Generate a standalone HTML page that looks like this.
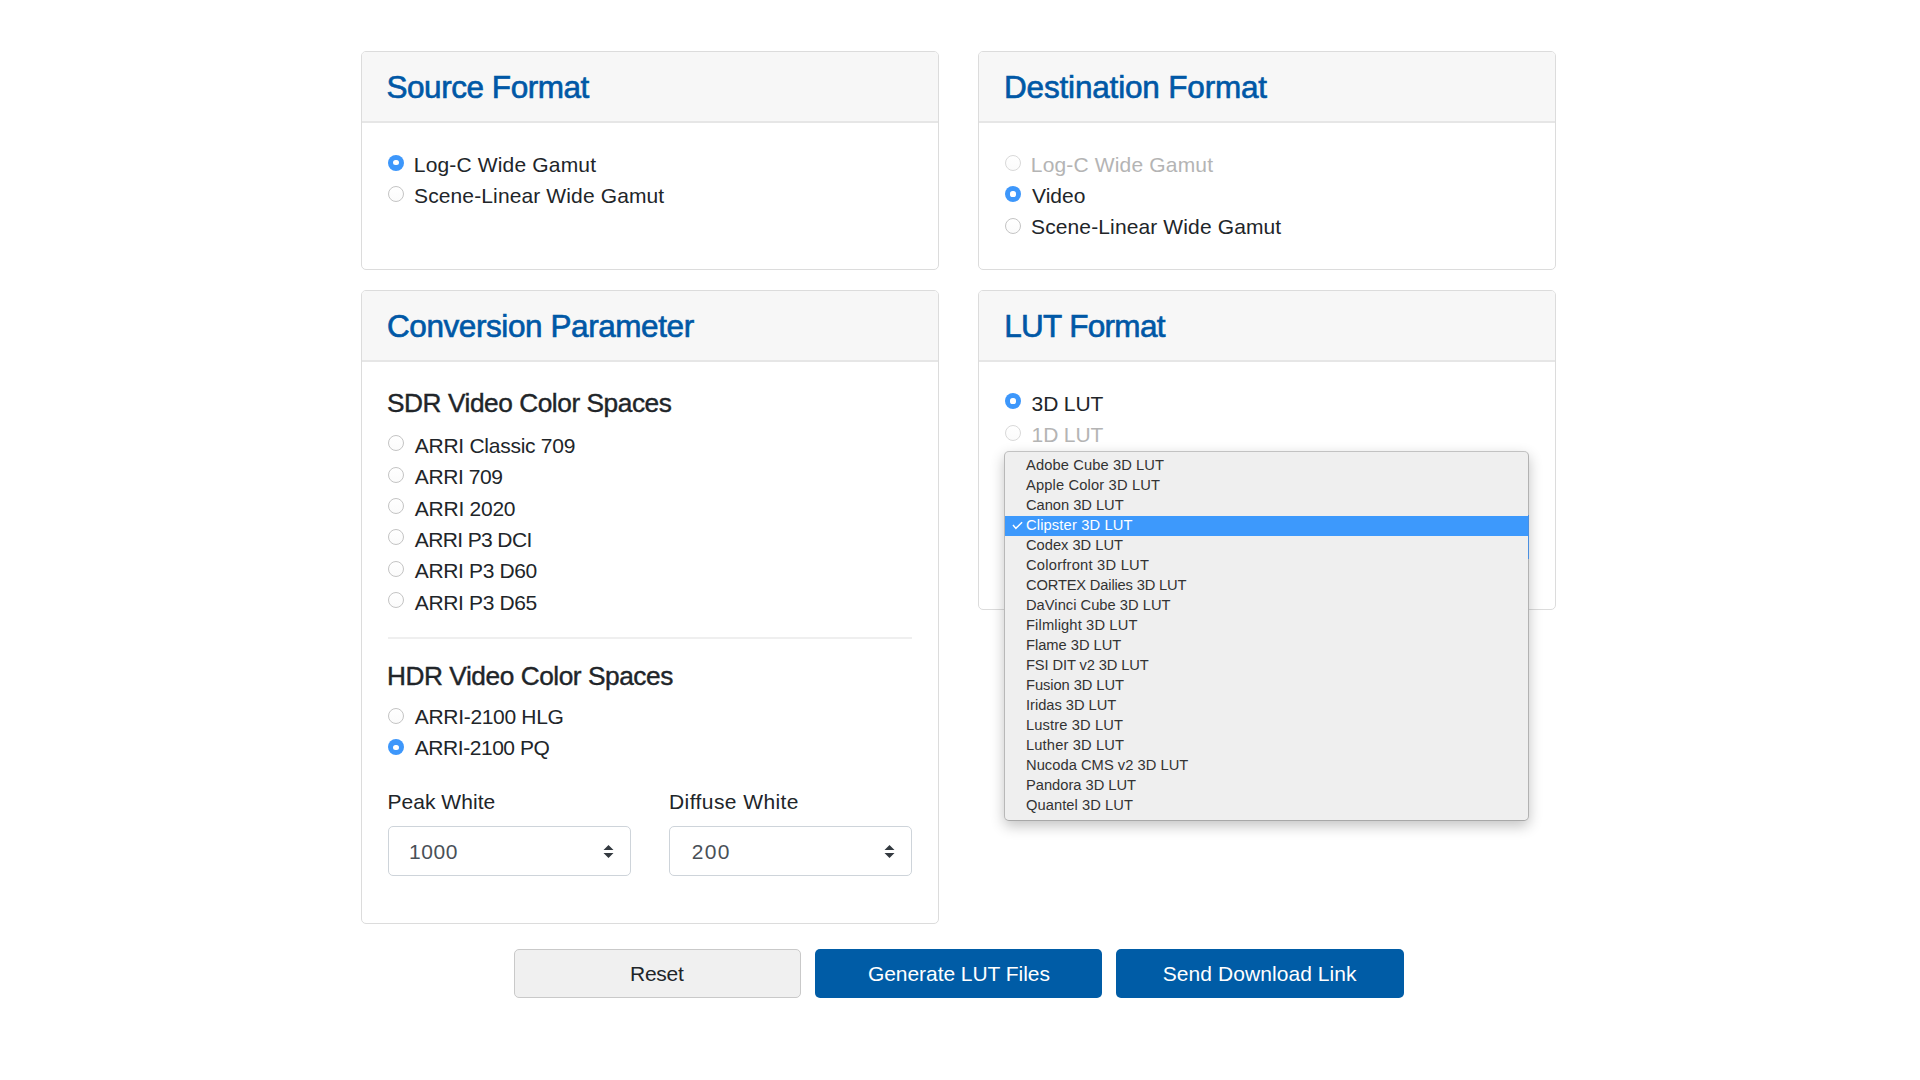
<!DOCTYPE html>
<html>
<head>
<meta charset="utf-8">
<style>
html,body{margin:0;padding:0;background:#fff;width:1920px;height:1080px;overflow:hidden;position:relative;}
body{font-family:"Liberation Sans",sans-serif;color:#212529;}
.card{position:absolute;box-sizing:border-box;border:1px solid #dcdcdc;border-radius:5px;background:#fff;}
.hdr{position:absolute;left:0;right:0;top:0;background:#f7f7f7;border-bottom:2px solid #e6e6e6;border-radius:4px 4px 0 0;}
.t{position:absolute;white-space:nowrap;line-height:1;}
.h4{font-size:31.5px;color:#0058a6;letter-spacing:-0.4px;-webkit-text-stroke:0.65px #0058a6;}
.h5{font-size:26.25px;color:#212529;letter-spacing:-0.45px;-webkit-text-stroke:0.4px #212529;}
.lb{font-size:21px;color:#212529;letter-spacing:0.15px;}
.dis{color:#b4b4b4;}
.r{position:absolute;width:16px;height:16px;box-sizing:border-box;border-radius:50%;border:1px solid #c4c4c4;background:linear-gradient(#fff,#fbfbfb);}
.r.on{border:none;background:#3d97fb;}
.r.on::after{content:"";position:absolute;left:5.4px;top:5.4px;width:5.2px;height:5.2px;border-radius:50%;background:#fff;}
.r.off{border-color:#d9d9d9;}
.sel{position:absolute;box-sizing:border-box;border:1px solid #ced4da;border-radius:5px;background:#fff;}
.btn{position:absolute;box-sizing:border-box;border-radius:5px;}
.dd{position:absolute;box-sizing:border-box;background:#efefef;border:1px solid #bababa;border-color:#c2c2c2 #b2b2b2 #a8a8a8 #b8b8b8;border-radius:5px;box-shadow:0 5px 14px rgba(0,0,0,0.24);}
.it{position:absolute;left:21px;font-size:14.7px;letter-spacing:0.08px;line-height:1;white-space:nowrap;color:#333;}
</style>
</head>
<body>

<!-- Card 1 Source Format -->
<div class="card" style="left:361px;top:51px;width:578px;height:219px;">
  <div class="hdr" style="height:69px;"></div>
</div>
<div class="t h4" style="left:386.5px;top:72px;letter-spacing:-0.458px;">Source Format</div>
<div class="r on" style="left:388px;top:154.5px;"></div>
<div class="t lb" style="left:413.8px;top:154px;letter-spacing:0.163px;">Log-C Wide Gamut</div>
<div class="r" style="left:388px;top:186px;"></div>
<div class="t lb" style="left:414.0px;top:185.3px;letter-spacing:0.125px;">Scene-Linear Wide Gamut</div>

<!-- Card 2 Destination Format -->
<div class="card" style="left:978px;top:51px;width:578px;height:219px;">
  <div class="hdr" style="height:69px;"></div>
</div>
<div class="t h4" style="left:1004.0px;top:72px;letter-spacing:-0.176px;">Destination Format</div>
<div class="r off" style="left:1005px;top:155px;"></div>
<div class="t lb dis" style="left:1030.8px;top:154px;letter-spacing:0.163px;">Log-C Wide Gamut</div>
<div class="r on" style="left:1005px;top:186px;"></div>
<div class="t lb" style="left:1032.0px;top:185.3px;letter-spacing:0px;">Video</div>
<div class="r" style="left:1005px;top:217.5px;"></div>
<div class="t lb" style="left:1031.0px;top:216px;letter-spacing:0.125px;">Scene-Linear Wide Gamut</div>

<!-- Card 3 Conversion Parameter -->
<div class="card" style="left:361px;top:290px;width:578px;height:634px;">
  <div class="hdr" style="height:69px;"></div>
</div>
<div class="t h4" style="left:387.0px;top:311px;letter-spacing:-0.421px;">Conversion Parameter</div>
<div class="t h5" style="left:387.0px;top:390px;letter-spacing:-0.448px;">SDR Video Color Spaces</div>

<div class="r" style="left:388px;top:435.2px;"></div>
<div class="t lb" style="left:414.8px;top:435px;letter-spacing:-0.267px;">ARRI Classic 709</div>
<div class="r" style="left:388px;top:466.5px;"></div>
<div class="t lb" style="left:414.8px;top:466.3px;letter-spacing:-0.4px;">ARRI 709</div>
<div class="r" style="left:388px;top:497.9px;"></div>
<div class="t lb" style="left:414.8px;top:497.7px;letter-spacing:-0.25px;">ARRI 2020</div>
<div class="r" style="left:388px;top:529.2px;"></div>
<div class="t lb" style="left:414.8px;top:529px;letter-spacing:-0.62px;">ARRI P3 DCI</div>
<div class="r" style="left:388px;top:560.6px;"></div>
<div class="t lb" style="left:414.8px;top:560.4px;letter-spacing:-0.36px;">ARRI P3 D60</div>
<div class="r" style="left:388px;top:592px;"></div>
<div class="t lb" style="left:414.8px;top:591.8px;letter-spacing:-0.36px;">ARRI P3 D65</div>

<div style="position:absolute;left:388px;top:637px;width:524px;height:2px;background:#efefef;"></div>

<div class="t h5" style="left:387.0px;top:663px;letter-spacing:-0.448px;">HDR Video Color Spaces</div>
<div class="r" style="left:388px;top:707.8px;"></div>
<div class="t lb" style="left:414.8px;top:705.5px;letter-spacing:-0.317px;">ARRI-2100 HLG</div>
<div class="r on" style="left:388px;top:739.3px;"></div>
<div class="t lb" style="left:414.8px;top:737px;letter-spacing:-0.455px;">ARRI-2100 PQ</div>

<div class="t lb" style="left:387.4px;top:791px;letter-spacing:0.056px;">Peak White</div>
<div class="t lb" style="left:669.0px;top:791px;letter-spacing:0.417px;">Diffuse White</div>

<div class="sel" style="left:388px;top:826px;width:243px;height:50px;"></div>
<div class="t lb" style="left:409.0px;top:841px;color:#495057;letter-spacing:0.567px;">1000</div>
<svg style="position:absolute;left:603px;top:844px;" width="11" height="15" viewBox="0 0 11 15"><path d="M5.5 1 L10.5 6 L0.5 6 Z M0.5 9 L10.5 9 L5.5 14 Z" fill="#343a40"/></svg>
<div class="sel" style="left:669px;top:826px;width:243px;height:50px;"></div>
<div class="t lb" style="left:691.7px;top:841px;color:#495057;letter-spacing:1.35px;">200</div>
<svg style="position:absolute;left:884px;top:844px;" width="11" height="15" viewBox="0 0 11 15"><path d="M5.5 1 L10.5 6 L0.5 6 Z M0.5 9 L10.5 9 L5.5 14 Z" fill="#343a40"/></svg>

<!-- Card 4 LUT Format -->
<div class="card" style="left:978px;top:290px;width:578px;height:320px;">
  <div class="hdr" style="height:69px;"></div>
</div>
<div class="t h4" style="left:1004.2px;top:311px;letter-spacing:-0.68px;">LUT Format</div>
<div class="r on" style="left:1005px;top:393px;"></div>
<div class="t lb" style="left:1031.6px;top:393px;letter-spacing:-0.14px;">3D LUT</div>
<div class="r off" style="left:1005px;top:424.7px;"></div>
<div class="t lb dis" style="left:1031.6px;top:424.3px;letter-spacing:-0.14px;">1D LUT</div>

<!-- Buttons -->
<div class="btn" style="left:514px;top:949px;width:287px;height:49px;background:#f0f0f0;border:1px solid #c9c9c9;"></div>
<div class="t lb" style="left:630.0px;top:963px;letter-spacing:-0.25px;">Reset</div>
<div class="btn" style="left:815px;top:949px;width:287px;height:49px;background:#005ca6;"></div>
<div class="t lb" style="left:867.9px;top:963px;color:#fff;letter-spacing:-0.05px;">Generate LUT Files</div>
<div class="btn" style="left:1116px;top:949px;width:287.5px;height:49px;background:#005ca6;"></div>
<div class="t lb" style="left:1162.8px;top:963px;color:#fff;letter-spacing:0.068px;">Send Download Link</div>

<!-- Dropdown -->
<div class="dd" style="left:1004px;top:451px;width:525px;height:370px;">
  <div style="position:absolute;left:0;right:0;top:64px;height:20px;background:#3d99fc;"></div>
  <div style="position:absolute;right:-1px;top:63px;width:1px;height:44px;background:#4a8fe0;"></div>
  <svg style="position:absolute;left:7px;top:69px;" width="12" height="9" viewBox="0 0 12 9"><path d="M1 4.1 L3.9 7.4 L10.1 1.2" fill="none" stroke="#fff" stroke-width="1.5"/></svg>
  <div class="it" style="top:6px;letter-spacing:0.106px;">Adobe Cube 3D LUT</div>
  <div class="it" style="top:26px;letter-spacing:0.147px;">Apple Color 3D LUT</div>
  <div class="it" style="top:46px;letter-spacing:-0.027px;">Canon 3D LUT</div>
  <div class="it" style="top:66px;color:#fff;letter-spacing:0.143px;">Clipster 3D LUT</div>
  <div class="it" style="top:86px;letter-spacing:-0.018px;">Codex 3D LUT</div>
  <div class="it" style="top:106px;letter-spacing:0.231px;">Colorfront 3D LUT</div>
  <div class="it" style="top:126px;letter-spacing:-0.165px;">CORTEX Dailies 3D LUT</div>
  <div class="it" style="top:146px;letter-spacing:0.017px;">DaVinci Cube 3D LUT</div>
  <div class="it" style="top:166px;letter-spacing:0.133px;">Filmlight 3D LUT</div>
  <div class="it" style="top:186px;letter-spacing:-0.018px;">Flame 3D LUT</div>
  <div class="it" style="top:206px;letter-spacing:-0.112px;">FSI DIT v2 3D LUT</div>
  <div class="it" style="top:226px;letter-spacing:-0.067px;">Fusion 3D LUT</div>
  <div class="it" style="top:246px;letter-spacing:-0.025px;">Iridas 3D LUT</div>
  <div class="it" style="top:266px;letter-spacing:0.125px;">Lustre 3D LUT</div>
  <div class="it" style="top:286px;letter-spacing:0.142px;">Luther 3D LUT</div>
  <div class="it" style="top:306px;letter-spacing:0.037px;">Nucoda CMS v2 3D LUT</div>
  <div class="it" style="top:326px;letter-spacing:-0.015px;">Pandora 3D LUT</div>
  <div class="it" style="top:346px;letter-spacing:0.062px;">Quantel 3D LUT</div>
</div>

</body>
</html>
